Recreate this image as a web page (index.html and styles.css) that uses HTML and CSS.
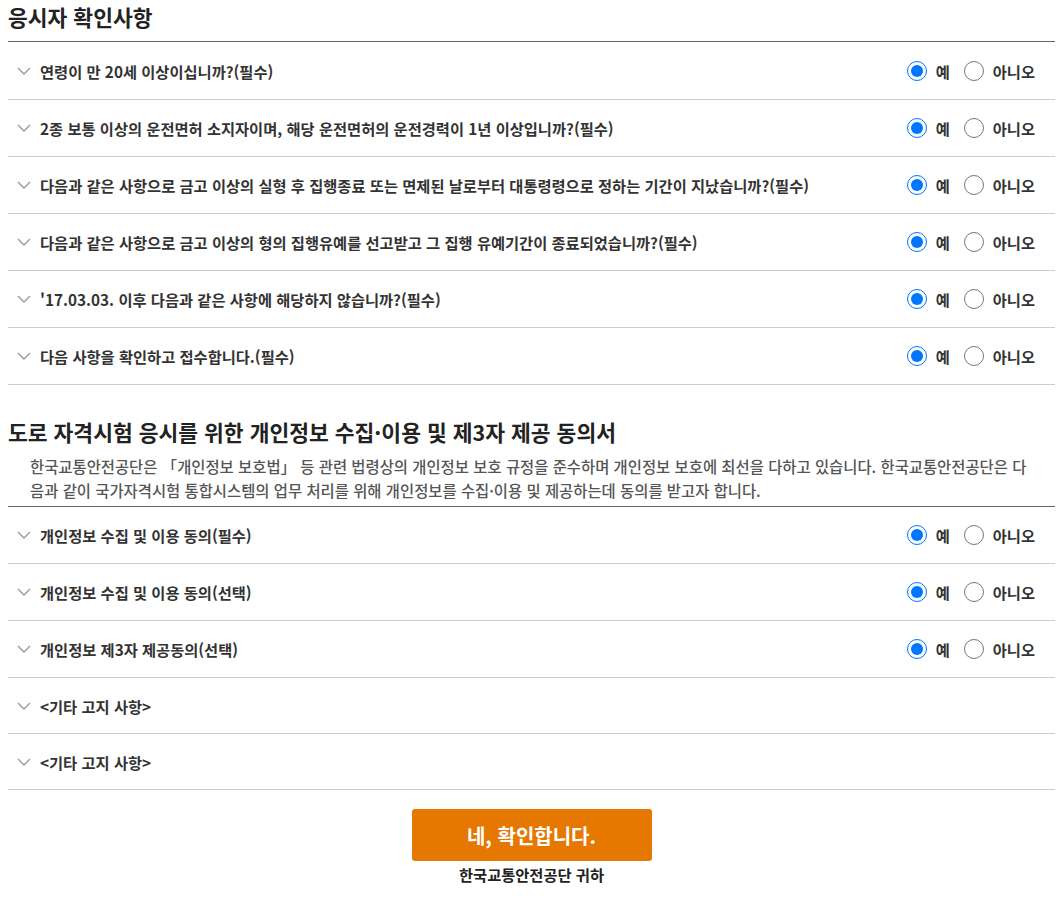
FILE: index.html
```html
<!DOCTYPE html>
<html lang="ko">
<head>
<meta charset="utf-8">
<link rel="stylesheet" href="styles.css">
</head>
<body>
<div class="page">
  <h2 class="title">응시자 확인사항</h2>
  <ul class="list top">
    <li class="row"><span class="chev"><svg width="14" height="8" viewBox="0 0 14 8"><path d="M1 1l6 6 6-6" fill="none" stroke="#999" stroke-width="1.4"/></svg></span><span class="label">연령이 만 20세 이상이십니까?(필수)</span><span class="opts"><label class="opt"><input type="radio" name="q1" checked>예</label><label class="opt"><input type="radio" name="q1">아니오</label></span></li>
    <li class="row"><span class="chev"><svg width="14" height="8" viewBox="0 0 14 8"><path d="M1 1l6 6 6-6" fill="none" stroke="#999" stroke-width="1.4"/></svg></span><span class="label">2종 보통 이상의 운전면허 소지자이며, 해당 운전면허의 운전경력이 1년 이상입니까?(필수)</span><span class="opts"><label class="opt"><input type="radio" name="q2" checked>예</label><label class="opt"><input type="radio" name="q2">아니오</label></span></li>
    <li class="row"><span class="chev"><svg width="14" height="8" viewBox="0 0 14 8"><path d="M1 1l6 6 6-6" fill="none" stroke="#999" stroke-width="1.4"/></svg></span><span class="label">다음과 같은 사항으로 금고 이상의 실형 후 집행종료 또는 면제된 날로부터 대통령령으로 정하는 기간이 지났습니까?(필수)</span><span class="opts"><label class="opt"><input type="radio" name="q3" checked>예</label><label class="opt"><input type="radio" name="q3">아니오</label></span></li>
    <li class="row"><span class="chev"><svg width="14" height="8" viewBox="0 0 14 8"><path d="M1 1l6 6 6-6" fill="none" stroke="#999" stroke-width="1.4"/></svg></span><span class="label">다음과 같은 사항으로 금고 이상의 형의 집행유예를 선고받고 그 집행 유예기간이 종료되었습니까?(필수)</span><span class="opts"><label class="opt"><input type="radio" name="q4" checked>예</label><label class="opt"><input type="radio" name="q4">아니오</label></span></li>
    <li class="row"><span class="chev"><svg width="14" height="8" viewBox="0 0 14 8"><path d="M1 1l6 6 6-6" fill="none" stroke="#999" stroke-width="1.4"/></svg></span><span class="label">'17.03.03. 이후 다음과 같은 사항에 해당하지 않습니까?(필수)</span><span class="opts"><label class="opt"><input type="radio" name="q5" checked>예</label><label class="opt"><input type="radio" name="q5">아니오</label></span></li>
    <li class="row"><span class="chev"><svg width="14" height="8" viewBox="0 0 14 8"><path d="M1 1l6 6 6-6" fill="none" stroke="#999" stroke-width="1.4"/></svg></span><span class="label">다음 사항을 확인하고 접수합니다.(필수)</span><span class="opts"><label class="opt"><input type="radio" name="q6" checked>예</label><label class="opt"><input type="radio" name="q6">아니오</label></span></li>
  </ul>

  <h2 class="title second">도로 자격시험 응시를 위한 개인정보 수집·이용 및 제3자 제공 동의서</h2>
  <p class="desc">한국교통안전공단은 「개인정보 보호법」 등 관련 법령상의 개인정보 보호 규정을 준수하며 개인정보 보호에 최선을 다하고 있습니다. 한국교통안전공단은 다음과 같이 국가자격시험 통합시스템의 업무 처리를 위해 개인정보를 수집·이용 및 제공하는데 동의를 받고자 합니다.</p>
  <ul class="list">
    <li class="row"><span class="chev"><svg width="14" height="8" viewBox="0 0 14 8"><path d="M1 1l6 6 6-6" fill="none" stroke="#999" stroke-width="1.4"/></svg></span><span class="label">개인정보 수집 및 이용 동의(필수)</span><span class="opts"><label class="opt"><input type="radio" name="p1" checked>예</label><label class="opt"><input type="radio" name="p1">아니오</label></span></li>
    <li class="row"><span class="chev"><svg width="14" height="8" viewBox="0 0 14 8"><path d="M1 1l6 6 6-6" fill="none" stroke="#999" stroke-width="1.4"/></svg></span><span class="label">개인정보 수집 및 이용 동의(선택)</span><span class="opts"><label class="opt"><input type="radio" name="p2" checked>예</label><label class="opt"><input type="radio" name="p2">아니오</label></span></li>
    <li class="row"><span class="chev"><svg width="14" height="8" viewBox="0 0 14 8"><path d="M1 1l6 6 6-6" fill="none" stroke="#999" stroke-width="1.4"/></svg></span><span class="label">개인정보 제3자 제공동의(선택)</span><span class="opts"><label class="opt"><input type="radio" name="p3" checked>예</label><label class="opt"><input type="radio" name="p3">아니오</label></span></li>
    <li class="row short"><span class="chev"><svg width="14" height="8" viewBox="0 0 14 8"><path d="M1 1l6 6 6-6" fill="none" stroke="#999" stroke-width="1.4"/></svg></span><span class="label">&lt;기타 고지 사항&gt;</span></li>
    <li class="row short"><span class="chev"><svg width="14" height="8" viewBox="0 0 14 8"><path d="M1 1l6 6 6-6" fill="none" stroke="#999" stroke-width="1.4"/></svg></span><span class="label">&lt;기타 고지 사항&gt;</span></li>
  </ul>

  <div class="actions">
    <button class="confirm" type="button">네, 확인합니다.</button>
    <p class="sign">한국교통안전공단 귀하</p>
  </div>
</div>
</body>
</html>
```

FILE: styles.css
```css
html, body {
  margin: 0;
  padding: 0;
  background: #fff;
}
body {
  font-family: "Noto Sans CJK KR", "Noto Sans", sans-serif;
  color: #333;
}
.page {
  padding: 0 8px;
}
.title {
  margin: 0;
  font-size: 21.5px;
  font-weight: 700;
  color: #222;
  line-height: 34px;
  padding-bottom: 7px;
}
.list {
  list-style: none;
  margin: 0;
  padding: 0;
}
.list.top {
  border-top: 1px solid #666;
  padding-top: 1px;
}
.row {
  display: flex;
  align-items: center;
  height: 56px;
  border-bottom: 1px solid #ccc;
  font-size: 15.3px;
  font-weight: 700;
  color: #333;
}
.row.short {
  height: 55px;
}
.chev {
  width: 32px;
  display: flex;
  align-items: center;
  justify-content: flex-start;
  padding-left: 9px;
  box-sizing: border-box;
}
.label {
  flex: 1;
}
.opts {
  display: flex;
  align-items: center;
  padding-right: 20px;
}
.opt {
  display: flex;
  align-items: center;
  margin-left: 14px;
}
.opt input {
  width: 20px;
  height: 20px;
  margin: 0 9px 0 0;
}
.second {
  margin-top: 30px;
  line-height: 34px;
  padding-bottom: 0;
}
.desc {
  margin: 5px 0 0;
  padding: 0 24px 4px 22px;
  font-size: 15.4px;
  font-weight: 500;
  line-height: 24px;
  color: #555;
  word-break: break-all;
  border-bottom: 1px solid #666;
}
.actions {
  display: flex;
  flex-direction: column;
  align-items: center;
  padding-top: 19px;
}
.confirm {
  width: 240px;
  height: 52px;
  border: 0;
  border-radius: 3px;
  background: #e67700;
  color: #fff;
  font-family: inherit;
  font-size: 20px;
  font-weight: 700;
}
.sign {
  margin: 2px 0 0;
  font-size: 15.3px;
  font-weight: 700;
  color: #222;
}
```
